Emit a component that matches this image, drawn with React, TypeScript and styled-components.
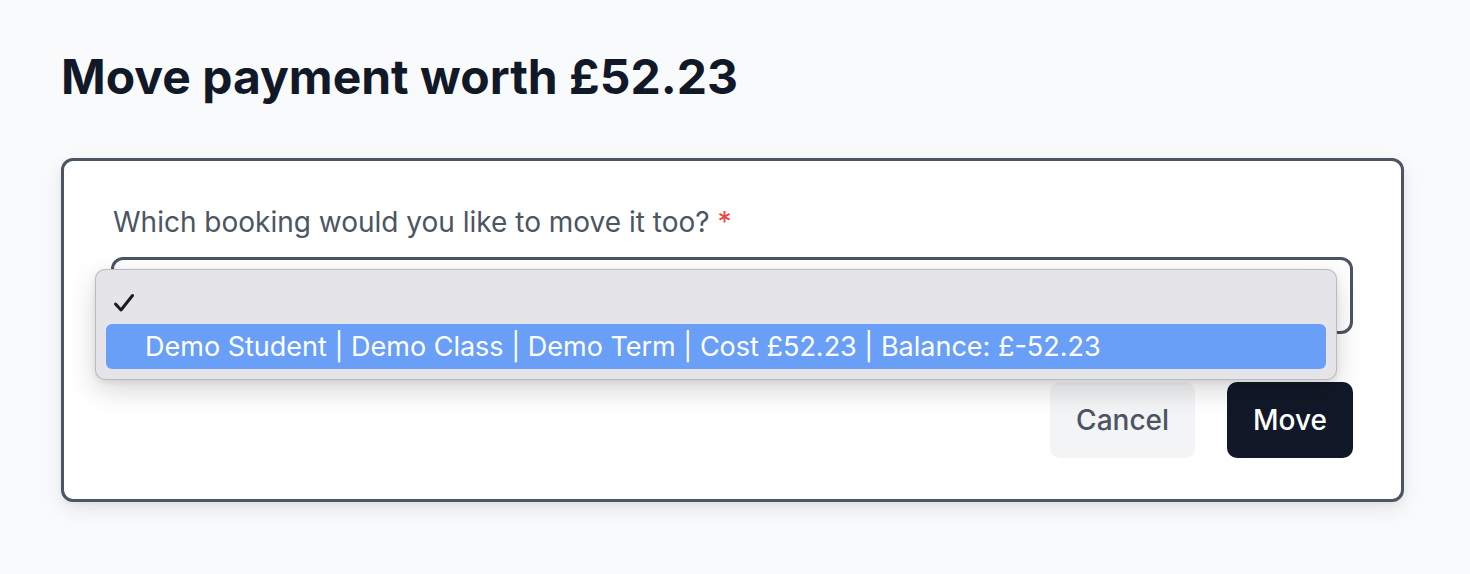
import React from "react";
import styled, { createGlobalStyle } from "styled-components";

const Global = createGlobalStyle`
  html, body { margin: 0; padding: 0; background: #f9fafb; }
  body { font-family: Inter, "Noto Sans", "Liberation Sans", sans-serif; -webkit-font-smoothing: antialiased; }
  * { box-sizing: border-box; }
`;

const Page = styled.div`
  padding: 45px 66px 60px 61px;
  min-height: 574px;
`;

const Title = styled.h1`
  margin: 0 0 49px 0;
  font-size: 48px;
  line-height: 64px;
  font-weight: 700;
  color: #111827;
  letter-spacing: 0;
`;

const Card = styled.div`
  width: 1343px;
  background: #ffffff;
  border: 3px solid #4b5563;
  border-radius: 12px;
  padding: 41px 48px 41px 47px;
  box-shadow: 0 8px 20px rgba(0, 0, 0, 0.08), 0 2px 6px rgba(0, 0, 0, 0.05);
`;

const Label = styled.div`
  font-size: 28px;
  line-height: 40px;
  color: #4b5563;
  padding-left: 2px;
`;

const Required = styled.span`
  color: #ef4444;
`;

const SelectWrap = styled.div`
  position: relative;
  margin-top: 15px;
`;

const SelectBox = styled.div`
  height: 77px;
  border: 3px solid #4b5563;
  border-radius: 12px;
  background: #ffffff;
`;

const Popup = styled.div`
  position: absolute;
  left: -16px;
  top: 12px;
  width: 1242px;
  padding: 11px 10px 10px 10px;
  background: #e5e4e9;
  border: 1px solid rgba(0, 0, 0, 0.18);
  border-radius: 10px;
  box-shadow: 0 10px 28px rgba(0, 0, 0, 0.16), 0 2px 6px rgba(0, 0, 0, 0.08);
  display: flex;
  flex-direction: column;
`;

const Option = styled.div<{ $active?: boolean }>`
  display: flex;
  align-items: center;
  height: ${(p) => (p.$active ? "45px" : "43px")};
  border-radius: 6px;
  background: ${(p) => (p.$active ? "#699ff7" : "transparent")};
  color: ${(p) => (p.$active ? "#ffffff" : "#1c1c1e")};
  font-size: 27px;
  white-space: nowrap;
`;

const CheckCol = styled.span`
  width: 39px;
  flex: none;
  padding-left: 7px;
  display: flex;
  align-items: center;
`;

const Actions = styled.div`
  margin-top: 48px;
  display: flex;
  justify-content: flex-end;
  gap: 32px;
`;

const Button = styled.button<{ $primary?: boolean }>`
  height: 76px;
  padding: 0 ${(p) => (p.$primary ? "26px" : "26px")};
  border: none;
  border-radius: 10px;
  font-family: inherit;
  font-size: 28px;
  font-weight: 500;
  background: ${(p) => (p.$primary ? "#111827" : "#f3f4f6")};
  color: ${(p) => (p.$primary ? "#ffffff" : "#4b5563")};
  cursor: pointer;
`;

const Check = () => (
  <svg width="22" height="20" viewBox="0 0 22 20">
    <path d="M2.5 11 L8 17 L19.5 2.5" fill="none" stroke="#1c1c1e" strokeWidth="3" strokeLinecap="round" strokeLinejoin="round" />
  </svg>
);

export default function App() {
  return (
    <>
      <Global />
      <Page>
        <Title>Move payment worth £52.23</Title>
        <Card>
          <Label>
            Which booking would you like to move it too? <Required>*</Required>
          </Label>
          <SelectWrap>
            <SelectBox />
            <Popup>
              <Option>
                <CheckCol>
                  <Check />
                </CheckCol>
              </Option>
              <Option $active>
                <CheckCol />
                Demo Student | Demo Class | Demo Term | Cost £52.23 | Balance: £-52.23
              </Option>
            </Popup>
          </SelectWrap>
          <Actions>
            <Button>Cancel</Button>
            <Button $primary>Move</Button>
          </Actions>
        </Card>
      </Page>
    </>
  );
}
